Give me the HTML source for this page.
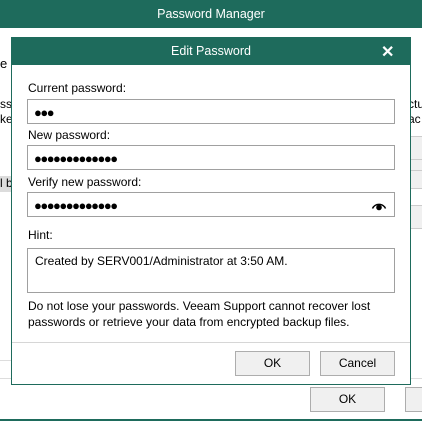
<!DOCTYPE html>
<html><head><style>
*{margin:0;padding:0;box-sizing:border-box}
body{width:422px;height:421px;background:#fff;font-family:"Liberation Sans",sans-serif;font-size:12px;color:#000;position:relative;overflow:hidden}
.a{position:absolute;white-space:nowrap}
.inp{position:absolute;left:27px;width:368px;height:25px;border:1px solid #a0a0a0;background:#fff}
.dots{position:absolute;left:6px;top:5px;font-size:13px;letter-spacing:-1.5px}
.lbl{position:absolute;left:28px;font-size:12px}
.btn{position:absolute;height:25px;width:75px;border:1px solid #adadad;background:#f0f0f0;text-align:center;line-height:23px;font-size:12px}
</style></head><body>
<div class="a" style="left:0;top:0;width:422px;height:28px;background:#1e6b5c;color:#fff;text-align:center;line-height:28px;font-size:12.5px">Password Manager</div>
<div class="a" style="left:0;top:56px;font-size:13px">e</div>
<div class="a" style="left:0;top:97px;font-size:12px">ss</div>
<div class="a" style="left:0;top:112px;font-size:12px">ke</div>
<div class="a" style="left:408px;top:97px;font-size:12px">ctu</div>
<div class="a" style="left:408px;top:112px;font-size:12px">ac</div>
<div class="a" style="left:0;top:176px;width:12px;height:16px;background:#dcdcdc;font-size:12px;overflow:hidden">l b</div>
<div class="a" style="left:410px;top:136px;width:12px;height:53px;background:#f0f0f0;border-top:1px solid #ccc;border-bottom:1px solid #ccc"></div>
<div class="a" style="left:410px;top:159px;width:12px;height:1px;background:#ccc"></div>
<div class="a" style="left:410px;top:205px;width:12px;height:24px;background:#f0f0f0;border-top:1px solid #ccc;border-bottom:1px solid #ccc"></div>
<div class="a" style="left:410px;top:170px;width:12px;height:1px;background:#ccc"></div>
<div class="a" style="left:0;top:360px;width:12px;height:1px;background:#ddd"></div>
<div class="a" style="left:0;top:378px;width:422px;height:1px;background:#ddd"></div>
<div class="btn" style="left:310px;top:387px">OK</div>
<div class="btn" style="left:405px;top:387px"></div>
<div class="a" style="left:0;top:419px;width:422px;height:2px;background:#1e6b5c"></div>

<div class="a" style="left:11px;top:37px;width:400px;height:348px;background:#fff;border:1px solid #1e6b5c"></div>
<div class="a" style="left:11px;top:37px;width:400px;height:28px;background:#1e6b5c;color:#fff;text-align:center;line-height:28px;font-size:12.5px">Edit Password</div>
<div class="a" style="left:381px;top:42px;color:#fff;font-size:16px;font-weight:bold">✕</div>

<div class="lbl" style="top:81px">Current password:</div>
<div class="inp" style="top:99px"><span class="dots">●●●</span></div>
<div class="lbl" style="top:128px">New password:</div>
<div class="inp" style="top:145px"><span class="dots">●●●●●●●●●●●●●</span></div>
<div class="lbl" style="top:175px">Verify new password:</div>
<div class="inp" style="top:192px"><span class="dots">●●●●●●●●●●●●●</span>
<svg class="a" style="left:343px;top:6px" width="16" height="12" viewBox="0 0 16 12"><path d="M1.5 9.5 A7 6.5 0 0 1 14.5 9.5" fill="none" stroke="#000" stroke-width="1.5"/><circle cx="8" cy="8.5" r="2.8" fill="#000"/></svg></div>
<div class="lbl" style="top:228px">Hint:</div>
<div class="inp" style="top:248px;height:45px"><span class="a" style="left:7px;top:5px">Created by SERV001/Administrator at 3:50 AM.</span></div>
<div class="a" style="left:28px;top:298px;line-height:16px;font-size:12px">Do not lose your passwords. Veeam Support cannot recover lost<br>passwords or retrieve your data from encrypted backup files.</div>
<div class="a" style="left:12px;top:342px;width:398px;height:1px;background:#d6d6d6"></div>
<div class="btn" style="left:235px;top:351px">OK</div>
<div class="btn" style="left:320px;top:351px">Cancel</div>
</body></html>
